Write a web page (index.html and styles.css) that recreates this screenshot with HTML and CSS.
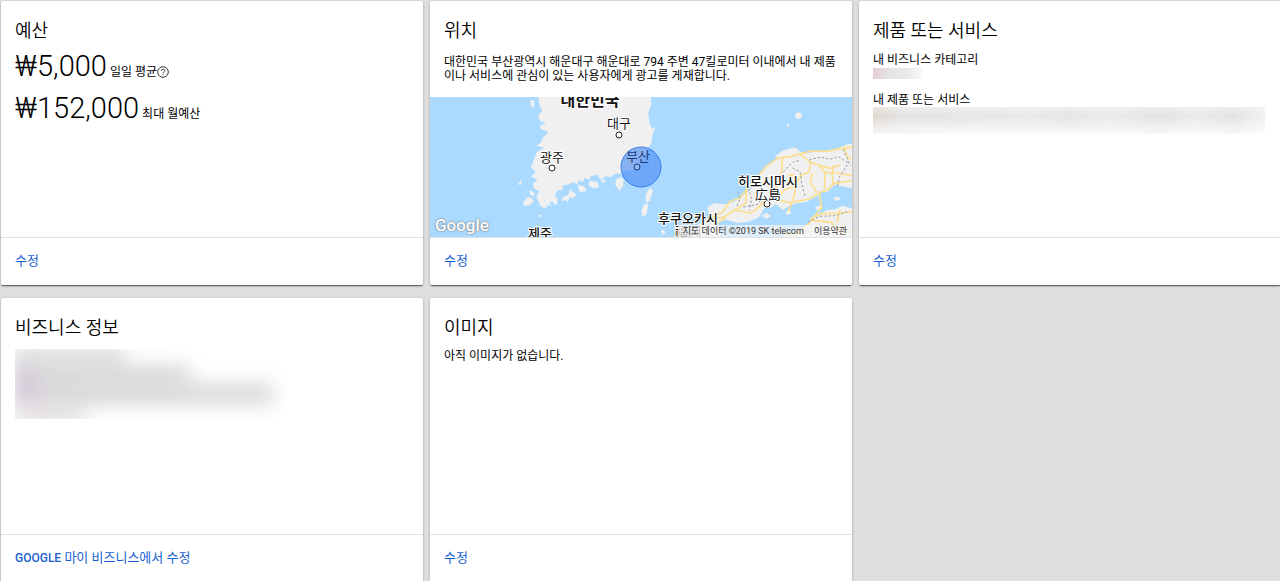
FILE: index.html
```html
<!DOCTYPE html>
<html lang="ko">
<head>
    <meta charset="UTF-8">
    <meta name="viewport" content="width=device-width, initial-scale=1.0">
    <title>캠페인 요약</title>
    <link rel="stylesheet" href="styles.css">
</head>
<body>

    <main class="cards">
        <!-- 예산 -->
        <section class="card">
            <div class="card-body">
                <h2>예산</h2>
                <div class="budgets">
                    <p class="budget"><span class="amount">₩5,000</span> 일일 평균<svg class="help" viewBox="0 0 12 12"><circle cx="6" cy="6" r="5.3"/><path d="M4.3 4.8c0-2.3 3.5-2.2 3.5-.2 0 1.300-1.800 1.300-1.800 2.700M6 8.300v1"/></svg></p>
                    <p class="budget"><span class="amount">₩152,000</span> 최대 월예산</p>
                </div>
            </div>
            <div class="card-footer"><a href="#">수정</a></div>
        </section>

        <!-- 위치 -->
        <section class="card">
            <div class="card-body">
                <h2>위치</h2>
                <p class="location">대한민국 부산광역시 해운대구 해운대로 794 주변 47킬로미터 이내에서 내 제품이나 서비스에 관심이 있는 사용자에게 광고를 게재합니다.</p>
                <div class="map">
                    <svg class="map-canvas" viewBox="0 0 422 140" preserveAspectRatio="xMidYMid slice">
                        <g transform="translate(0 -2) scale(0.33333)">
                            <g class="land">
                                <!-- 한반도 -->
                                <path d="M325 0L328 30 337 48 324 62 330 78 348 84 330 92 331 101 356 111 340 126 333 142 319 153 341 158 320 172 309 200 303 216 317 232 303 244 322 255 309 266 312 281 327 289 319 306 326 321 334 338 344 315 349 330 362 334 358 320 378 322 385 314 374 301 384 286 398 284 397 272 417 268 431 261 441 269 446 256 459 261 463 249 477 254 484 242 503 239 511 254 527 244 543 246 558 235 574 237 588 224 607 228 620 211 642 190 653 160 664 145 668 117 677 95 667 101 658 82 655 52 664 30 662 0Z"/>
                                <path d="M281 320l13-14 12 3 5 9-9 11-17 5-6-7zM298 286l15 6 1 12-14-5zM558 254l14-8 9 8-2 20-11 13-12-16zM445 269l19 6 5 14-18 2-6-9zM478 258l24 2 5 16-19 4-12-9zM400 305l15-4 5-18 9 9 10 5-8 12-12-3-6 15-8-6-11 4zM338 317l14 6-3 17-12-3zM370 321l10-3 3 9-9 3zM301 14l13 4-2 15-8 5-2-14zM263 268l13-13-3 15zM326 360l8-1 1 6-7 1zM513 254l10-2 4 8-10 3z"/>
                                <path d="M651 290l10-12 8 9-10 31-10 5-3-18zM634 346l9-20 12 1-5 29-12 11z"/>
                                <path d="M1095 60l8-9 10 3 3 9-7 9-12-2zM1070 90l6-4 3 7-7 3zM1084 84l4-2 1 5zM692 408l9-4 6 9-8 7z"/>
                                <!-- 혼슈 -->
                                <path d="M1268 146L1250 148 1233 156 1214 164 1182 167 1150 171 1129 175 1110 170 1100 159 1087 158 1056 168 1035 184 1045 189 1024 204 993 231 976 252 963 283 938 302 910 321 885 328 852 324 833 337 838 364 866 382 888 374 922 384 956 380 985 368 1004 339 1026 337 1037 327 1058 344 1091 326 1130 320 1167 300 1172 287 1190 293 1214 270 1268 280Z"/>
                                <!-- 시코쿠, 규슈 -->
                                <path d="M1056 430l16-20 28-3 30-17 16-17 20-14 24-13 28-4 18-10 32 8v90zM750 430l24-30 19 4 12-16 22-10 34 8 12 16-4 28z"/>
                                <path d="M993 362l17-9 12 10-12 9zM1030 396l21 2 13 11-23 9zM1211 307l17-1 4 8-18 3zM1065 350l16-6 2 12-12 3zM1155 338l16-8 7 10-16 5z"/>
                            </g>
                            <g class="road">
                                <path d="M838 369L878 352 900 319 930 309 955 277 983 246 1007 215 1042 190 1083 184 1114 176 1143 168 1188 169 1230 161 1268 156"/>
                                <path d="M838 371L880 367 913 345 960 354 979 344 1002 319 1038 314 1082 323 1137 312 1170 292 1192 285 1212 265 1268 257"/>
                                <path d="M1110 176L1140 202 1167 211 1185 232 1220 234 1268 242M1142 204L1137 230 1115 240 1090 276 1064 284 1038 313M1058 188L1055 230 1038 270 1041 304M1075 242L1091 239 1103 260 1096 284 1088 318M1185 232l-1 49M1213 210l-7 29 4 29M1148 234l-7 28 19 29M950 284l-3 41-37 23M1242 155l10 30 12 9M1168 298l7 40-29 34M1140 371l35-15 45-1 48-5M1060 419l45-4 40-39 58 6 30 31 35-5M1230 345l-9 38M834 371l-43 38M855 388l32-20M1171 211l28 9 34-10M1087 321l-13 29"/>
                            </g>
                            <path class="border" d="M923 290l8 20-12 27M955 280l10 32-7 34M1060 230l30-30 18-3M1088 219l22 11 6 40 10 37M1138 195l34-9 27 7 27-8 35 23M1239 163l18 38-28 44-7 33M1135 381l34-17 47-2 36-12M940 336l44-8 11-24"/>
                        </g>

                        <circle class="radius" cx="211" cy="70" r="20"/>

                        <g class="cities">
                            <circle cx="189" cy="38" r="3"/>
                            <circle cx="122" cy="71" r="3"/>
                            <circle class="covered" cx="207" cy="70" r="3"/>
                            <circle cx="337" cy="107" r="3"/>
                        </g>

                        <g class="labels">
                            <text class="country" x="160" y="9">대한민국</text>
                            <text x="189" y="31">대구</text>
                            <text x="122" y="65">광주</text>
                            <text class="busan" x="208" y="64">부산</text>
                            <text class="strong" x="110" y="141">제주</text>
                            <text class="strong" x="338" y="89">히로시마시</text>
                            <text x="338" y="102">広島</text>
                            <text class="strong" x="258" y="126">후쿠오카시</text>
                            <text x="258" y="139">福岡</text>
                        </g>
                    </svg>
                    <span class="map-logo">Google</span>
                    <div class="map-credit"><span>지도 데이터 ©2019 SK telecom</span><a href="#">이용약관</a></div>
                </div>
            </div>
            <div class="card-footer"><a href="#">수정</a></div>
        </section>

        <!-- 제품 또는 서비스 -->
        <section class="card">
            <div class="card-body">
                <h2>제품 또는 서비스</h2>
                <p class="field">내 비즈니스 카테고리</p>
                <div class="masked masked-category"></div>
                <p class="field">내 제품 또는 서비스</p>
                <div class="masked masked-products"></div>
            </div>
            <div class="card-footer"><a href="#">수정</a></div>
        </section>

        <!-- 비즈니스 정보 -->
        <section class="card">
            <div class="card-body">
                <h2>비즈니스 정보</h2>
                <div class="masked masked-info">
                    <i class="line line-name"></i>
                    <i class="line line-street"></i>
                    <i class="line line-city"></i>
                    <i class="line line-phone"></i>
                </div>
            </div>
            <div class="card-footer"><a href="#"><span class="brand">GOOGLE</span> 마이 비즈니스에서 수정</a></div>
        </section>

        <!-- 이미지 -->
        <section class="card">
            <div class="card-body">
                <h2>이미지</h2>
                <p class="empty">아직 이미지가 없습니다.</p>
            </div>
            <div class="card-footer"><a href="#">수정</a></div>
        </section>
    </main>

</body>
</html>
```
FILE: styles.css
```css
body {
    font-family: Roboto, "Noto Sans CJK KR", sans-serif;
    font-size: 12px;
    line-height: 14px;
    color: #000;
    background-color: #dfdfdf;
    margin: 0;
    overflow-x: hidden;
}

h2 {
    margin: 0;
    font-size: 18px;
    font-weight: 350;
    line-height: 24px;
}

p {
    margin: 0;
}

a {
    color: #1a5fd0;
    text-decoration: none;
}

.cards {
    display: grid;
    grid-template-columns: repeat(3, 1fr);
    gap: 13px 7px;
    margin: 1px -1px 0 1px;
}

.card {
    display: flex;
    flex-direction: column;
    background-color: #fff;
    border-radius: 2px;
    box-shadow: 0 2px 1px -1px rgba(0, 0, 0, 0.5), 0 1px 3px rgba(0, 0, 0, 0.3);
}

.card-body {
    flex: 1;
    min-height: 218px;
    padding: 18px 14px 0;
}

.card-footer {
    padding: 15px 14px 16px;
    border-top: 1px solid #e0e0e0;
    font-size: 13px;
    line-height: 16px;
}

.brand {
    font-size: 12px;
    font-weight: 500;
}

/* Presupuesto */
.budgets {
    margin-top: 8px;
}

.budget {
    line-height: 42px;
}

.amount {
    font-size: 29px;
    font-weight: 300;
    line-height: 30px;
}

.help {
    width: 12px;
    height: 12px;
    vertical-align: -2px;
    fill: none;
    stroke: #333;
}

/* Mapa */
.location {
    margin-top: 12px;
}

.map {
    position: relative;
    height: 140px;
    margin: 14px -14px 0;
    overflow: hidden;
    background-color: #aadaff;
}

.map-canvas {
    display: block;
    width: 100%;
    height: 100%;
}

.land {
    fill: #f0f0f0;
}

.road {
    fill: none;
    stroke: #fbdf8f;
    stroke-width: 5;
    stroke-linejoin: round;
}

.border {
    fill: none;
    stroke: #999;
    stroke-width: 3;
    stroke-dasharray: 7 6;
}

.radius {
    fill: rgba(66, 133, 244, 0.6);
    stroke: #3b7ded;
}

.cities {
    fill: #fff;
    stroke: #222;
}

.cities .covered {
    fill: #8db9fa;
    stroke: #1c3d78;
}

.labels {
    font-size: 13px;
    text-anchor: middle;
    fill: #111;
    stroke: #fff;
    stroke-width: 2;
    paint-order: stroke;
}

.labels .strong {
    font-weight: 500;
}

.labels .country {
    font-size: 16px;
    font-weight: 700;
}

.labels .busan {
    fill: #1c3d78;
    stroke: none;
}

.map-logo {
    position: absolute;
    left: 5px;
    bottom: 3px;
    font-size: 17px;
    font-weight: 500;
    line-height: 18px;
    color: #fff;
    text-shadow: 0 0 2px #777, 0 0 1px #777;
}

.map-credit {
    position: absolute;
    right: 0;
    bottom: 0;
    display: flex;
    gap: 10px;
    padding: 0 5px;
    font-size: 9px;
    line-height: 12px;
    background-color: rgba(245, 245, 245, 0.7);
}

.map-credit,
.map-credit a {
    color: #333;
}

.empty {
    margin-top: 9px;
}

/* Datos ocultos */
.field {
    margin-top: 10px;
}

.masked {
    overflow: hidden;
}

.masked-category {
    width: 49px;
    height: 11px;
    margin-top: 1px;
    margin-bottom: 14px;
    background: linear-gradient(to right, #e5ced2, #e4e4e4 35%, #e9e9e9 70%, #f8f8f8);
}

.masked-products {
    height: 27px;
    margin-right: 2px;
    background: linear-gradient(to bottom, rgba(255, 255, 255, 0.4), rgba(255, 255, 255, 0.1) 35%, rgba(255, 255, 255, 0.8)), linear-gradient(to right, #ddd3ca, #e0e0e0 7%, #e6e6e6 40%, #e2e2e2 50%, #e8e8e8 60%, #dfdfdf 73%, #e8e8e8 83%, #dfdfdf 92%, #efefef);
}

.masked-info {
    width: 272px;
    height: 70px;
    margin-top: 9px;
}

.line {
    display: block;
    height: 18px;
    filter: blur(10px);
    background: linear-gradient(to right, #c0a8c6, #cecece 14%, #d2d2d2);
}

.line-name {
    width: 110px;
    background: #d4d9d7;
}

.line-street {
    width: 175px;
}

.line-city {
    width: 258px;
}

.line-phone {
    width: 70px;
    background: #dcd8dc;
}
```
